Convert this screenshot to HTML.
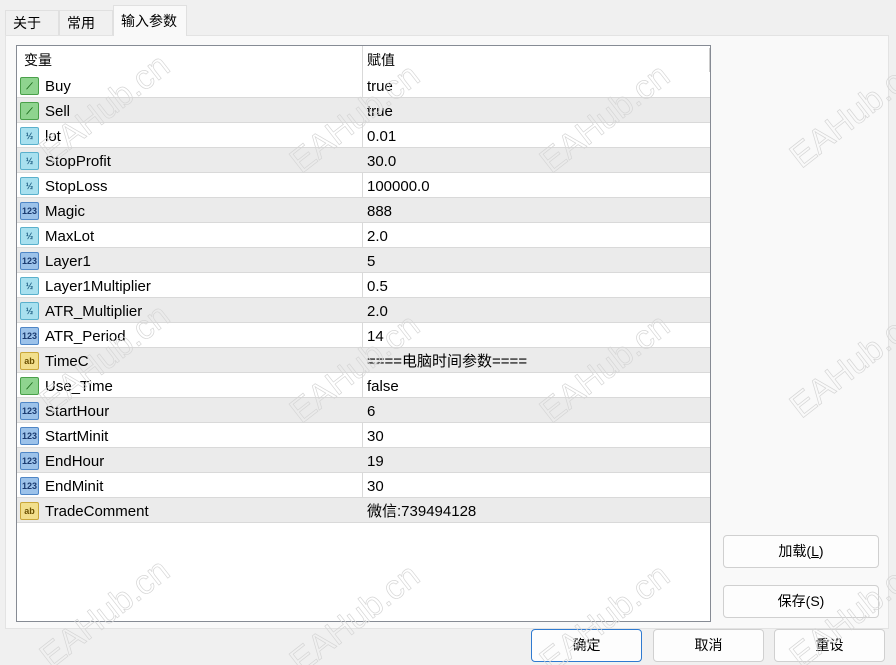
<!DOCTYPE html>
<html style="overflow:hidden;width:896px;height:665px"><head><meta charset="utf-8"><style>
*{margin:0;padding:0;box-sizing:border-box}
body{width:896px;height:665px;background:#f0f0f0;font-family:"Liberation Sans","Noto Sans CJK SC",sans-serif;font-size:15px;color:#000;position:relative;overflow:hidden}
.abs{position:absolute}
.tab{position:absolute;border:1px solid #e0e0e0;border-bottom:none;background:#f0f0f0;font-size:14px;padding-left:7px;line-height:24px}
.panel{left:5px;top:35px;width:884px;height:594px;background:#f9f9f9;border:1px solid #e3e3e3}
.list{left:16px;top:45px;width:695px;height:577px;background:#fff;border:1px solid #868b94}
.row{position:absolute;left:0;width:693px;height:25px;line-height:27px;border-bottom:1px solid #d9d9d9}
.row.g{background:#ebebeb}
.n{position:absolute;left:28px}
.v{position:absolute;left:350px}
.ic{position:absolute;left:3px;top:4px;width:19px;height:18px;border-radius:2px;font-size:9px;font-weight:bold;text-align:center;line-height:17px}
.b{background:#8fd48f;border:1px solid #4aa04a;color:#1a6a1a}
.d{background:#a8e0ef;border:1px solid #5ab0cc;color:#1a5a80}
.i{background:#9cc2ea;border:1px solid #4f86c6;color:#1a3a70}
.s{background:#f2df8c;border:1px solid #c9a73a;color:#6a5000}
.btn{position:absolute;background:#fdfdfd;border:1px solid #d0d0d0;border-radius:4px;text-align:center;font-size:14px;line-height:30px}
.wm{position:absolute;font-size:34px;line-height:34px;color:transparent;-webkit-text-stroke:0.7px #d6d6d6;transform:rotate(-38deg);transform-origin:left bottom;z-index:5;pointer-events:none;white-space:nowrap}
</style></head><body>
<div class="tab" style="left:5px;top:10px;width:54px;height:26px">关于</div>
<div class="tab" style="left:59px;top:10px;width:54px;height:26px">常用</div>
<div class="tab" style="left:113px;top:5px;width:74px;height:31px;background:#f9f9f9;line-height:30px;z-index:2">输入参数</div>
<div class="abs panel"></div>
<div class="abs list">
<div class="abs" style="left:7px;top:0;height:27px;line-height:28px;font-size:14px">变量</div>
<div class="abs" style="left:350px;top:0;height:27px;line-height:28px;font-size:14px">赋值</div>
<div class="abs" style="left:345px;top:0;width:1px;height:477px;background:#d9d9d9"></div>
<div class="abs" style="left:692px;top:2px;width:1px;height:24px;background:#ccc"></div>
<div style="position:absolute;top:27px;left:0">
<div class="row" style="top:0"><span class="ic b">⟋</span><span class="n">Buy</span><span class="v">true</span></div>
<div class="row g" style="top:25px"><span class="ic b">⟋</span><span class="n">Sell</span><span class="v">true</span></div>
<div class="row" style="top:50px"><span class="ic d">½</span><span class="n">lot</span><span class="v">0.01</span></div>
<div class="row g" style="top:75px"><span class="ic d">½</span><span class="n">StopProfit</span><span class="v">30.0</span></div>
<div class="row" style="top:100px"><span class="ic d">½</span><span class="n">StopLoss</span><span class="v">100000.0</span></div>
<div class="row g" style="top:125px"><span class="ic i">123</span><span class="n">Magic</span><span class="v">888</span></div>
<div class="row" style="top:150px"><span class="ic d">½</span><span class="n">MaxLot</span><span class="v">2.0</span></div>
<div class="row g" style="top:175px"><span class="ic i">123</span><span class="n">Layer1</span><span class="v">5</span></div>
<div class="row" style="top:200px"><span class="ic d">½</span><span class="n">Layer1Multiplier</span><span class="v">0.5</span></div>
<div class="row g" style="top:225px"><span class="ic d">½</span><span class="n">ATR_Multiplier</span><span class="v">2.0</span></div>
<div class="row" style="top:250px"><span class="ic i">123</span><span class="n">ATR_Period</span><span class="v">14</span></div>
<div class="row g" style="top:275px"><span class="ic s">ab</span><span class="n">TimeC</span><span class="v">====电脑时间参数====</span></div>
<div class="row" style="top:300px"><span class="ic b">⟋</span><span class="n">Use_Time</span><span class="v">false</span></div>
<div class="row g" style="top:325px"><span class="ic i">123</span><span class="n">StartHour</span><span class="v">6</span></div>
<div class="row" style="top:350px"><span class="ic i">123</span><span class="n">StartMinit</span><span class="v">30</span></div>
<div class="row g" style="top:375px"><span class="ic i">123</span><span class="n">EndHour</span><span class="v">19</span></div>
<div class="row" style="top:400px"><span class="ic i">123</span><span class="n">EndMinit</span><span class="v">30</span></div>
<div class="row g" style="top:425px"><span class="ic s">ab</span><span class="n">TradeComment</span><span class="v">微信:739494128</span></div>
</div>
</div>
<div class="btn" style="left:723px;top:535px;width:156px;height:33px">加载(<u>L</u>)</div>
<div class="btn" style="left:723px;top:585px;width:156px;height:33px">保存(S)</div>
<div class="btn" style="left:531px;top:629px;width:111px;height:33px;border:1px solid #2f7ad0">确定</div>
<div class="btn" style="left:653px;top:629px;width:111px;height:33px">取消</div>
<div class="btn" style="left:774px;top:629px;width:111px;height:33px">重设</div>
<div class="wm" style="left:55px;top:135px">EAHub.cn</div>
<div class="wm" style="left:305px;top:145px">EAHub.cn</div>
<div class="wm" style="left:555px;top:145px">EAHub.cn</div>
<div class="wm" style="left:805px;top:140px">EAHub.cn</div>
<div class="wm" style="left:55px;top:385px">EAHub.cn</div>
<div class="wm" style="left:305px;top:395px">EAHub.cn</div>
<div class="wm" style="left:555px;top:395px">EAHub.cn</div>
<div class="wm" style="left:805px;top:390px">EAHub.cn</div>
<div class="wm" style="left:55px;top:640px">EAHub.cn</div>
<div class="wm" style="left:305px;top:645px">EAHub.cn</div>
<div class="wm" style="left:555px;top:645px">EAHub.cn</div>
<div class="wm" style="left:805px;top:640px">EAHub.cn</div>
</body></html>
